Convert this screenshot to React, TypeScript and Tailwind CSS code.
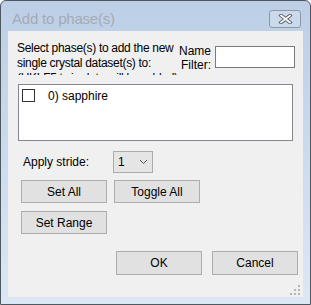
import { useState } from 'react';

const font = { fontFamily: '"Segoe UI", "Liberation Sans", Arial, sans-serif' };

function WinButton({ label, className = '' }: { label: string; className?: string }) {
  return (
    <button
      className={`w-[86px] h-[23px] bg-[#e1e1e1] border border-[#adadad] text-[12px] text-black leading-none ${className}`}
    >
      {label}
    </button>
  );
}

function CloseGlyph() {
  return (
    <svg width="15" height="10" viewBox="0 0 15 10">
      <path d="M3 1.5 L12 8.5 M12 1.5 L3 8.5" stroke="#5d6670" strokeWidth="3.6" strokeLinecap="square" />
      <path d="M3 1.5 L12 8.5 M12 1.5 L3 8.5" stroke="#ffffff" strokeWidth="1.6" strokeLinecap="square" />
    </svg>
  );
}

function Grip() {
  const dots = [
    [8, 0],
    [4, 4], [8, 4],
    [0, 8], [4, 8], [8, 8],
  ];
  return (
    <svg width="10" height="10" viewBox="0 0 10 10">
      {dots.map(([x, y], i) => (
        <rect key={i} x={x} y={y} width="2" height="2" fill="#b5b5b5" />
      ))}
    </svg>
  );
}

export default function App() {
  const [checked, setChecked] = useState(false);
  const [filter, setFilter] = useState('');

  return (
    <div
      style={font}
      className="w-[311px] h-[305px] flex flex-col border border-[#4f5761] rounded-t-[6px] bg-gradient-to-b from-[#bccfe6] to-[#dbe7f5] overflow-hidden"
    >
      {/* Title bar */}
      <div className="h-[30px] flex items-start">
        <span className="ml-[11px] mt-[9px] text-[15px] leading-[18px] text-[#a3abb6] tracking-[-0.2px]">Add to phase(s)</span>
        <button className="ml-auto mr-[9px] mt-[9px] w-[32px] h-[18px] rounded-[3px] border border-[#8e99a6] bg-[#d3dfee]/60 flex items-center justify-center">
          <CloseGlyph />
        </button>
      </div>

      {/* Client area */}
      <div className="mx-[7px] mb-[7px] flex-1 bg-[#f0f0f0] text-[12px] text-black flex flex-col relative">
        <div className="h-[53px] flex items-start">
          <div className="ml-[9px] mt-[10px] w-[162px] h-[34px] overflow-hidden leading-[15px] whitespace-nowrap tracking-[-0.3px]">
            Select phase(s) to add the new
            <br />
            single crystal dataset(s) to:
            <br />
            (HKLF5 twin data will be added)
          </div>
          <div className="mt-[13px] w-[32px] text-right leading-[14px]">
            Name
            <br />
            Filter:
          </div>
          <input
            value={filter}
            onChange={(e) => setFilter(e.target.value)}
            className="ml-[4px] mt-[15px] w-[80px] h-[22px] bg-white border border-[#7a7a7a] outline-none px-1 text-[12px]"
          />
        </div>

        <div className="ml-[10px] w-[275px] h-[57px] bg-white border border-[#828790]">
          <label className="flex items-center h-[21px] pl-[3px]">
            <span
              onClick={() => setChecked(!checked)}
              className="w-[13px] h-[13px] border border-[#333333] bg-white flex items-center justify-center"
            >
              {checked && <span className="w-[7px] h-[7px] bg-[#333]" />}
            </span>
            <span className="ml-[13px] leading-none">0) sapphire</span>
          </label>
        </div>

        <div className="mt-[10px] flex items-center">
          <span className="ml-[15px] w-[90px]">Apply stride:</span>
          <div className="w-[40px] h-[22px] bg-[#e5e5e5] border border-[#acacac] flex items-center">
            <span className="ml-[4px]">1</span>
            <svg className="ml-auto mr-[4px]" width="9" height="6" viewBox="0 0 9 6">
              <polyline points="1,1 4.5,4.5 8,1" fill="none" stroke="#555" strokeWidth="1" />
            </svg>
          </div>
        </div>

        <div className="mt-[7px] ml-[13px] flex gap-[7px]">
          <WinButton label="Set All" />
          <WinButton label="Toggle All" />
        </div>
        <div className="mt-[8px] ml-[13px] flex">
          <WinButton label="Set Range" />
        </div>

        <div className="mt-[17px] ml-[108px] flex gap-[10px]">
          <WinButton label="OK" className="h-[24px]" />
          <WinButton label="Cancel" className="h-[24px]" />
        </div>

        <div className="absolute right-[3px] bottom-[2px]">
          <Grip />
        </div>
      </div>
    </div>
  );
}
